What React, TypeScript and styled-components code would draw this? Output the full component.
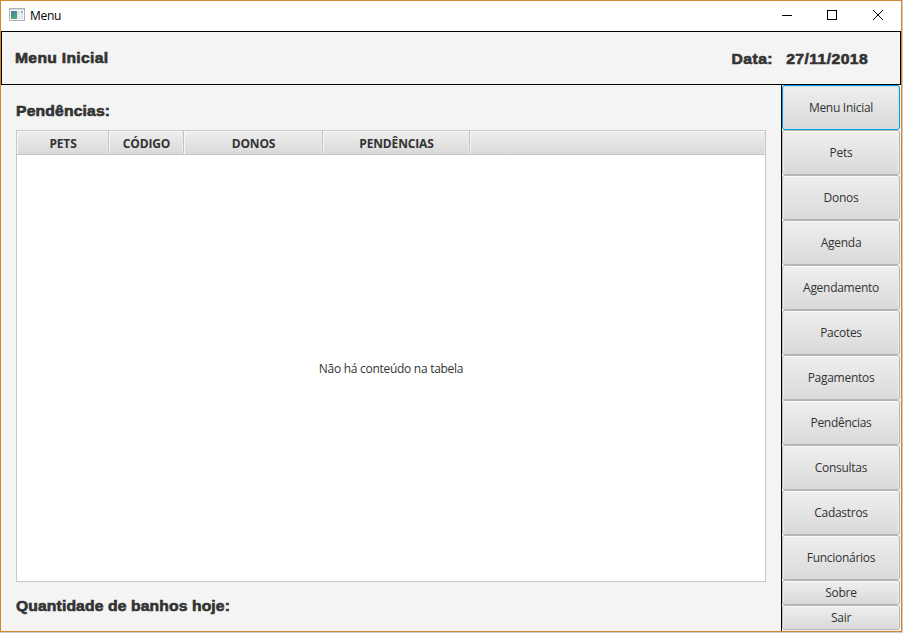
import React from "react";
import styled, { createGlobalStyle } from "styled-components";

const GlobalStyle = createGlobalStyle`
  * { box-sizing: border-box; }
  body { margin: 0; background: #cfcdca; overflow: hidden; }
`;

const Window = styled.div`
  width: 902px;
  height: 632px;
  border: 1px solid #d4862a;
  background: #f4f4f4;
  display: flex;
  flex-direction: column;
  font-family: "Open Sans", "Noto Sans", sans-serif;
  font-size: 12px;
  letter-spacing: -0.28px;
  color: #333;
`;

const TitleBar = styled.header`
  height: 30px;
  flex: none;
  background: #fff;
  display: flex;
  align-items: center;
  padding-left: 8px;
  color: #000;
`;

const WindowIcon = styled.svg`
  width: 16px;
  height: 14px;
  margin-top: -2px;
`;

const WindowTitle = styled.span`
  flex: 1;
  margin-left: 5px;
  line-height: 16px;
`;

const WindowControls = styled.svg`
  width: 138px;
  height: 30px;
`;

const Banner = styled.div`
  height: 54px;
  flex: none;
  border: 1px solid #000;
  display: flex;
  justify-content: space-between;
  padding: 16px 32px 0 13px;
`;

const Heading = styled.h2<{ $spacing: number; $drop?: number; $fromRight?: boolean }>`
  width: max-content;
  margin: ${(p) => p.$drop ?? 0}px 0 0;
  font: bold 14px/20px "Liberation Sans", Arial, sans-serif;
  letter-spacing: ${(p) => p.$spacing}px;
  -webkit-text-stroke: 0.6px #333;
  white-space: nowrap;
  transform: scaleX(1.12);
  transform-origin: ${(p) => (p.$fromRight ? "right" : "left")};
`;

const DateGroup = styled.div`
  display: flex;
  gap: 22px;
`;

const Body = styled.div`
  flex: 1;
  display: flex;
  min-height: 0;
`;

const Content = styled.main`
  width: 780px;
  padding: 16px 15px 0;
`;

const Table = styled.section`
  width: 750px;
  height: 452px;
  margin: 9px 0 14px;
  border: 1px solid #c8c8c8;
  background: #fff;
  display: flex;
  flex-direction: column;
`;

const TableHeader = styled.div`
  height: 24px;
  display: flex;
  border-bottom: 1px solid #c8c8c8;
`;

const ColumnHeader = styled.div<{ $width?: number }>`
  ${(p) => (p.$width ? `width: ${p.$width}px; border-right: 1px solid #c3c3c3;` : "flex: 1;")}
  background: linear-gradient(#efefef, #d9d9d9);
  box-shadow: inset 1px 1px #f7f7f7, inset -1px 0 #e9e9e9;
  display: flex;
  align-items: center;
  justify-content: center;
  font-weight: bold;
  line-height: 16px;
  padding: 3px 0 0 1px;
  letter-spacing: -0.15px;
`;

const Placeholder = styled.div`
  flex: 1;
  display: flex;
  align-items: center;
  justify-content: center;
`;

const Sidebar = styled.nav`
  width: 119px;
  border-left: 1px solid #000;
  display: flex;
  flex-direction: column;
`;

const NavButton = styled.button<{ $short?: boolean; $focused?: boolean }>`
  height: ${(p) => (p.$short ? 25 : 45)}px;
  flex: none;
  width: 118px;
  padding: 0;
  border: 1px solid ${(p) => (p.$focused ? "#039ed3" : "#b5b5b5")};
  border-radius: 3px;
  background: linear-gradient(#efefef, #d9d9d9);
  box-shadow: ${(p) =>
    p.$focused ? "inset 0 0 0 1px #cfe3ec" : "inset 0 1px #fbfbfb, inset 1px 0 #eee, inset -1px 0 #eee"};
  font: inherit;
  line-height: 16px;
  letter-spacing: inherit;
  color: #333;
`;

const columns = [
  { label: "PETS", width: 92 },
  { label: "CÓDIGO", width: 75 },
  { label: "DONOS", width: 139 },
  { label: "PENDÊNCIAS", width: 147 },
];

const sections = [
  "Menu Inicial", "Pets", "Donos", "Agenda", "Agendamento", "Pacotes",
  "Pagamentos", "Pendências", "Consultas", "Cadastros", "Funcionários",
];

export default function App() {
  return (
    <>
      <GlobalStyle />
      <Window>
        <TitleBar>
          <WindowIcon viewBox="0 0 16 14">
            <defs>
              <linearGradient id="pane" x2="0.5" y2="1">
                <stop stopColor="#4579a6" />
                <stop offset="1" stopColor="#58a878" />
              </linearGradient>
            </defs>
            <rect x=".5" y=".5" width="15" height="12" fill="#fafafa" stroke="#b0b4b8" />
            <rect x="1" y="1" width="14" height="1" fill="#cfd5da" />
            <rect x="2" y="3" width="6" height="8" fill="url(#pane)" />
            <rect x="8" y="3" width="3" height="8" fill="#e3e6e8" />
            <rect x="12" y="3" width="2" height="8" fill="#d5e2e6" />
            <rect x="12" y="3" width="2" height="2" fill="#8fb4bf" />
          </WindowIcon>
          <WindowTitle>Menu</WindowTitle>
          <WindowControls viewBox="0 0 138 30" fill="none" stroke="#000" shapeRendering="crispEdges">
            <path d="M19 14.5h10M64.5 9.5h9v9h-9z" />
            <path d="M110 9l10 10M120 9l-10 10" shapeRendering="auto" />
          </WindowControls>
        </TitleBar>
        <Banner>
          <Heading $spacing={0.27}>Menu Inicial</Heading>
          <DateGroup>
            <Heading $spacing={0.4} $drop={1} $fromRight>Data:</Heading>
            <Heading $spacing={0.38} $drop={1} $fromRight>27/11/2018</Heading>
          </DateGroup>
        </Banner>
        <Body>
          <Content>
            <Heading $spacing={0.15}>Pendências:</Heading>
            <Table>
              <TableHeader>
                {columns.map((c) => (
                  <ColumnHeader key={c.label} $width={c.width}>{c.label}</ColumnHeader>
                ))}
                <ColumnHeader />
              </TableHeader>
              <Placeholder>Não há conteúdo na tabela</Placeholder>
            </Table>
            <Heading $spacing={0.11}>Quantidade de banhos hoje:</Heading>
          </Content>
          <Sidebar>
            {sections.map((s, i) => (
              <NavButton key={s} $focused={i === 0}>{s}</NavButton>
            ))}
            <NavButton $short>Sobre</NavButton>
            <NavButton $short>Sair</NavButton>
          </Sidebar>
        </Body>
      </Window>
    </>
  );
}
